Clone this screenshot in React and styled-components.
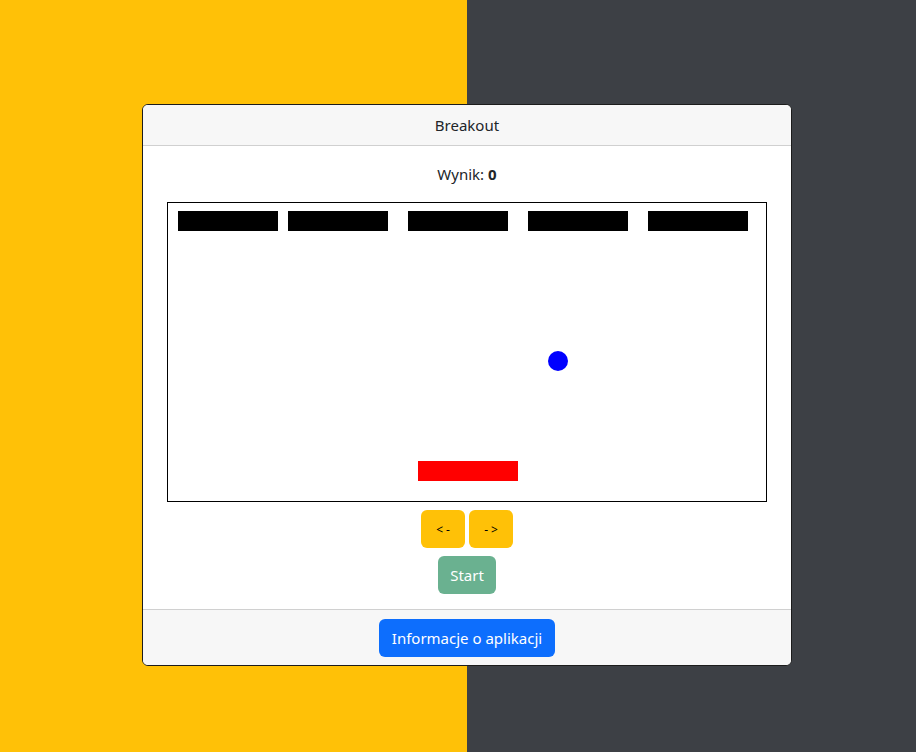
import React from "react";
import styled, { createGlobalStyle } from "styled-components";

const Global = createGlobalStyle`
  html, body { margin: 0; padding: 0; }
  body {
    font-family: "Segoe UI", "Noto Sans", "Open Sans", Arial, sans-serif;
    font-size: 16px;
    color: #212529;
  }
`;

const Page = styled.div`
  width: 916px;
  height: 752px;
  background: linear-gradient(to right, #ffc107 0, #ffc107 467px, #3d4045 467px, #3d4045 100%);
  padding-top: 104px;
  box-sizing: border-box;
`;

const Card = styled.div`
  margin-left: 142px;
  width: 650px;
  box-sizing: border-box;
  background: #fff;
  border: 1px solid #1c1c1c;
  border-radius: 6px;
  overflow: hidden;
  display: flex;
  flex-direction: column;
`;

const Header = styled.div`
  height: 40px;
  display: flex;
  align-items: center;
  justify-content: center;
  background: #f7f7f7;
  border-bottom: 1px solid #d0d0d0;
  font-size: 15px;
`;

const Body = styled.div`
  padding: 16px 0 15px;
  display: flex;
  flex-direction: column;
  align-items: center;
`;

const Score = styled.div`
  line-height: 24px;
  font-size: 15px;
  margin-bottom: 16px;
  b { font-weight: 700; }
`;

const Board = styled.svg`
  display: block;
  width: 600px;
  height: 300px;
  box-sizing: border-box;
  border: 1px solid #000;
  background: #fff;
`;

const Controls = styled.div`
  display: flex;
  gap: 4px;
  margin-top: 8px;
`;

const Btn = styled.button`
  height: 38px;
  border: none;
  border-radius: 6px;
  font-family: inherit;
  cursor: pointer;
  padding: 0;
`;

const ArrowBtn = styled(Btn)`
  width: 44px;
  background: #ffc107;
  color: #000;
  font-size: 12px;
  letter-spacing: 3px;
  text-indent: 3px;
`;

const StartBtn = styled(Btn)`
  margin-top: 8px;
  width: 58px;
  background: #6ab190;
  color: #fff;
  font-size: 15px;
`;

const Footer = styled.div`
  background: #f7f7f7;
  border-top: 1px solid #d0d0d0;
  padding: 9px 0 8px;
  display: flex;
  justify-content: center;
`;

const InfoBtn = styled(Btn)`
  width: 176px;
  background: #0d6efd;
  color: #fff;
  font-size: 15px;
`;

const bricks = [10, 120, 240, 360, 480];

export default function App() {
  return (
    <>
      <Global />
      <Page>
        <Card>
          <Header>Breakout</Header>
          <Body>
            <Score>
              Wynik: <b>0</b>
            </Score>
            <Board viewBox="1 1 598 298">
              {bricks.map((x) => (
                <rect key={x} x={x + 1} y={9} width={100} height={20} fill="#000" />
              ))}
              <circle cx={391} cy={159} r={10} fill="#0000ff" />
              <rect x={251} y={259} width={100} height={20} fill="#ff0000" />
            </Board>
            <Controls>
              <ArrowBtn>&lt;-</ArrowBtn>
              <ArrowBtn>-&gt;</ArrowBtn>
            </Controls>
            <StartBtn>Start</StartBtn>
          </Body>
          <Footer>
            <InfoBtn>Informacje o aplikacji</InfoBtn>
          </Footer>
        </Card>
      </Page>
    </>
  );
}
